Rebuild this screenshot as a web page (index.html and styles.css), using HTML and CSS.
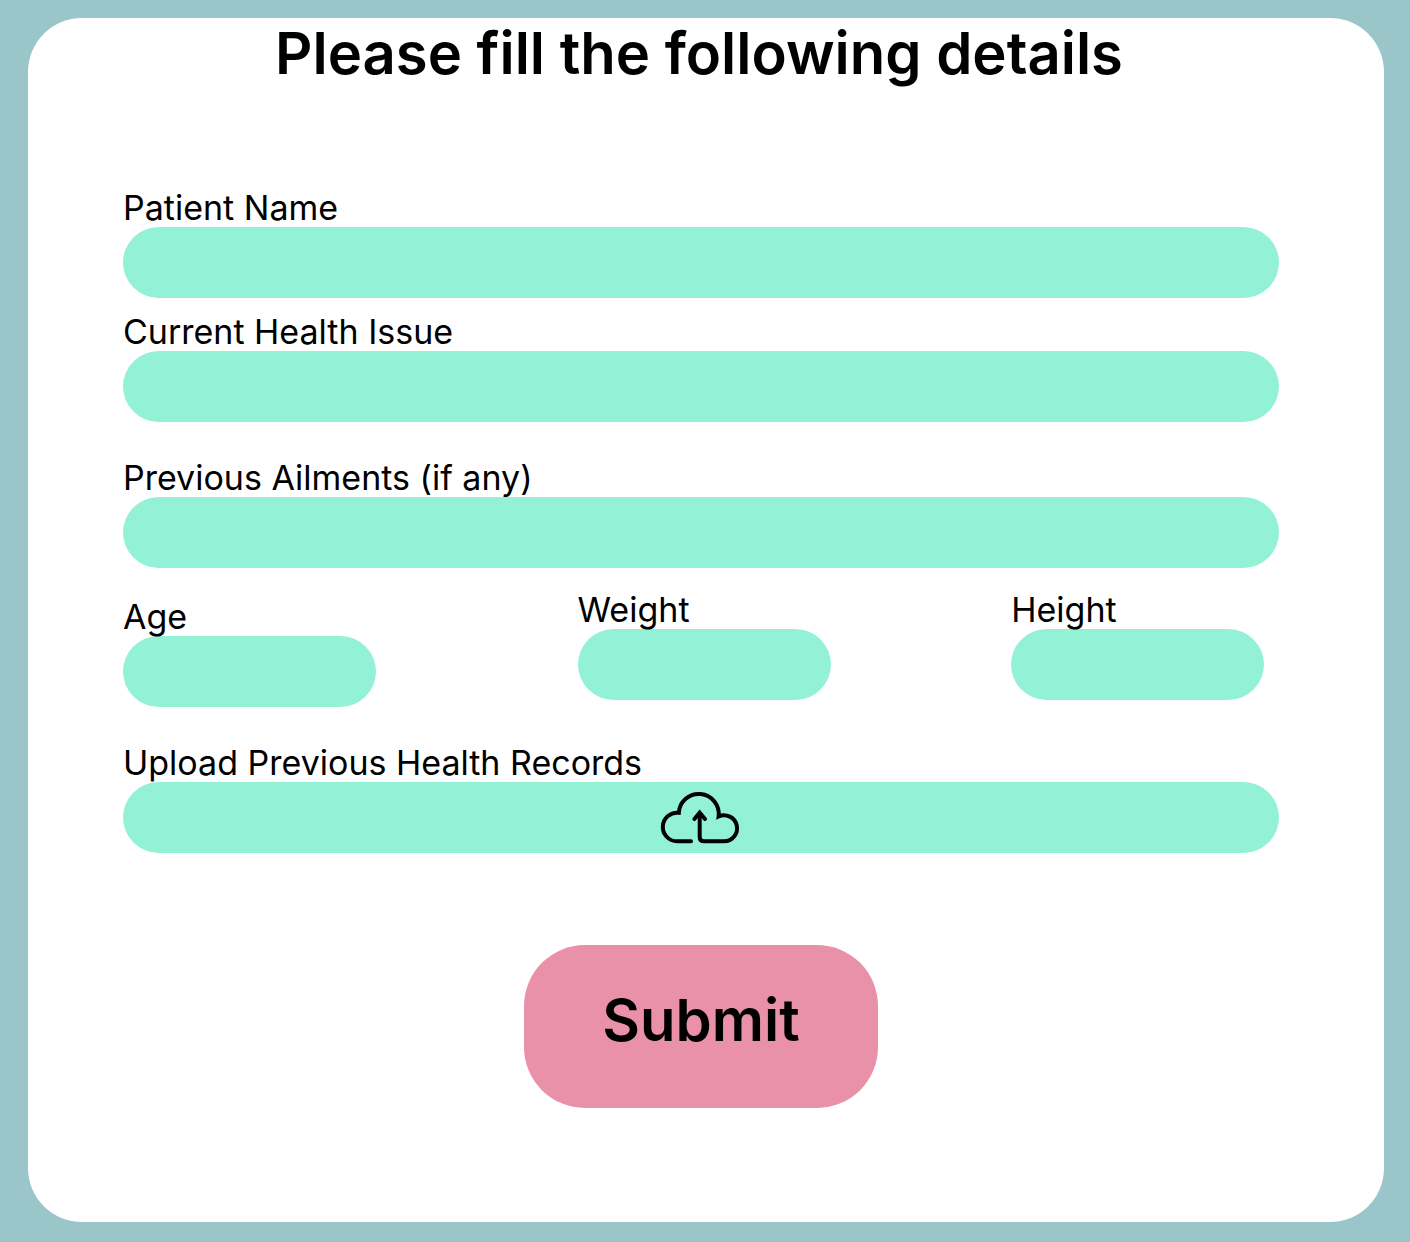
FILE: index.html
```html
<!DOCTYPE html>
<html lang="en">
<head>
  <meta charset="utf-8">
  <meta name="viewport" content="width=device-width, initial-scale=1">
  <title>Patient details</title>
  <link rel="stylesheet" href="styles.css">
</head>
<body>
  <main class="card">
    <h1 class="title">Please fill the following details</h1>
    <form class="form">
      <div class="field">
        <label class="label" for="name">Patient Name</label>
        <input class="input" id="name" name="name" type="text">
      </div>
      <div class="field field-close">
        <label class="label" for="issue">Current Health Issue</label>
        <input class="input" id="issue" name="issue" type="text">
      </div>
      <div class="field field-apart">
        <label class="label" for="ailments">Previous Ailments (if any)</label>
        <input class="input" id="ailments" name="ailments" type="text">
      </div>
      <div class="measures">
        <div class="field field-age">
          <label class="label" for="age">Age</label>
          <input class="input input-short" id="age" name="age" type="text" inputmode="numeric">
        </div>
        <div class="field">
          <label class="label" for="weight">Weight</label>
          <input class="input input-short" id="weight" name="weight" type="text" inputmode="decimal">
        </div>
        <div class="field">
          <label class="label" for="height">Height</label>
          <input class="input input-short" id="height" name="height" type="text" inputmode="decimal">
        </div>
      </div>
      <div class="field field-apart">
        <label class="label" for="records">Upload Previous Health Records</label>
        <div class="upload">
          <input class="input input-file" id="records" name="records" type="file">
          <svg class="upload-icon" viewBox="0 0 83 53" aria-hidden="true">
            <path d="M31 50.3H17A14.3 14.3 0 1 1 18.8 21.8A20 20 0 1 1 58.6 25.5A13 13 0 1 1 64 50.3H44Q39.7 50.3 39.7 46V22"/>
            <path d="M34.4 28L39.7 21.6L45 28"/>
          </svg>
        </div>
      </div>
      <button class="submit" type="submit">Submit</button>
    </form>
  </main>
</body>
</html>
```
FILE: styles.css
```css
* {
  box-sizing: border-box;
}

body {
  margin: 0;
  padding: 18px 26px 20px 28px;
  background: #9ac5c9;
  color: #000;
  font-family: Inter, "Liberation Sans", sans-serif;
}

.card {
  padding: 0 105px 114px 95px;
  border-radius: 54px;
  background: #fff;
}

.title {
  margin: 0 0 99px;
  padding-right: 4px;
  font-size: 58px;
  font-weight: 600;
  line-height: 70px;
  text-align: center;
}

.form {
  display: flex;
  flex-direction: column;
}

.field {
  display: flex;
  flex-direction: column;
}

.field-close {
  margin-top: 13px;
}

.field-apart {
  margin-top: 35px;
}

.label {
  position: relative;
  padding-top: 2px;
  font-size: 34px;
  line-height: 38px;
  white-space: nowrap;
}

.input {
  width: 100%;
  height: 71px;
  padding: 0 36px;
  border: 0;
  border-radius: 36px;
  background: #93f2d5;
  color: inherit;
  font: inherit;
  font-size: 34px;
}

.input-short {
  max-width: 253px;
}

.measures {
  display: grid;
  grid-template-columns: 455fr 434fr 268fr;
  margin-top: 21px;
}

.field-age {
  padding-top: 7px;
}

.upload {
  display: grid;
  align-items: center;
  justify-items: center;
}

.upload > * {
  grid-area: 1 / 1;
}

.input-file {
  color: transparent;
  cursor: pointer;
}

.input-file::file-selector-button {
  display: none;
}

.upload-icon {
  width: 83px;
  height: 53px;
  fill: none;
  stroke: #000;
  stroke-width: 4;
  stroke-linecap: round;
  pointer-events: none;
}

.submit {
  align-self: center;
  margin-top: 92px;
  padding: 40px 78px 53px;
  border: 0;
  border-radius: 61px;
  background: #e891a8;
  color: inherit;
  font: inherit;
  font-size: 58px;
  font-weight: 600;
  line-height: 70px;
  cursor: pointer;
}
```
